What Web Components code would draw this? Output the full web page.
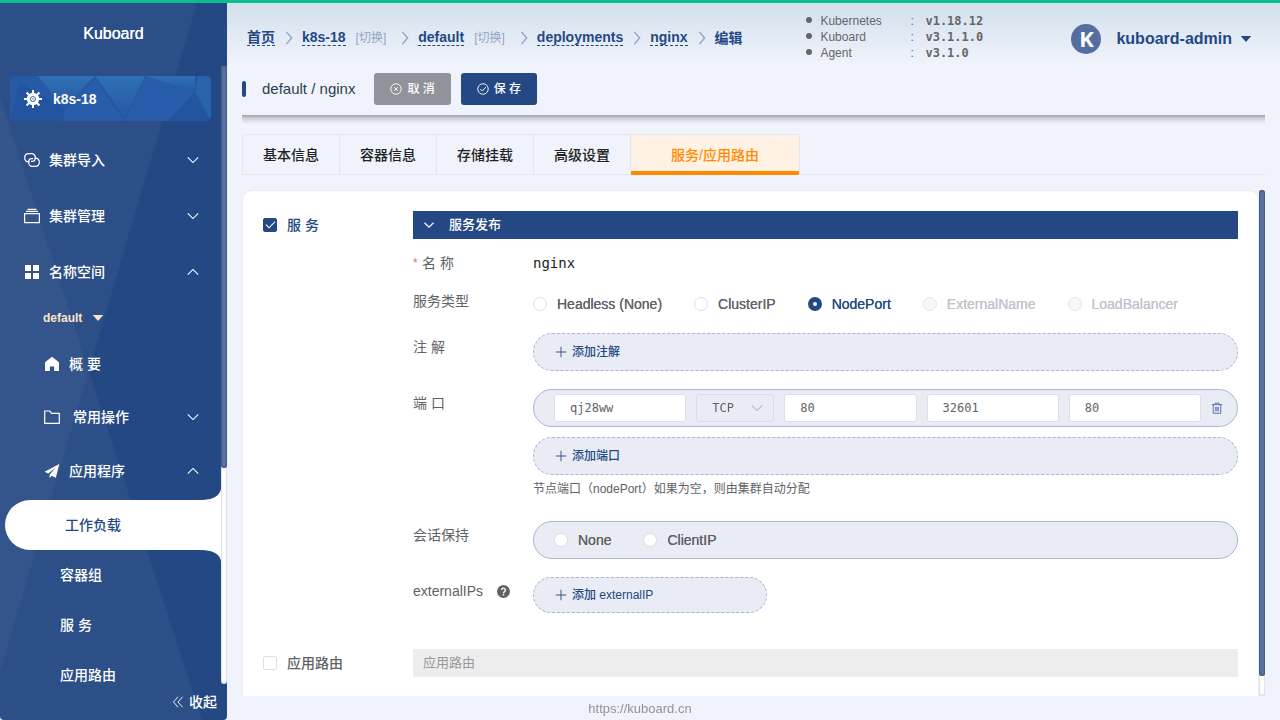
<!DOCTYPE html>
<html lang="zh-CN">
<head>
<meta charset="utf-8">
<meta name="viewport" content="width=device-width, initial-scale=1">
<title>Kuboard</title>
<style>
  :root {
    --brand: #244883;
    --text: #606266;
    --line: #e2e6ef;
    --page: #f0f3fc;
    --mono: "DejaVu Sans Mono", "Noto Sans CJK SC", monospace;
  }
  html, body { height: 100%; margin: 0; }
  body {
    font: 14px/20px "Liberation Sans", "Noto Sans CJK SC", sans-serif;
    color: var(--text);
    background: var(--page);
  }
</style>
</head>
<body>
<kb-app></kb-app>

<script>
const ICONS = {
  down: '<path d="M2 5l6 6 6-6"/>',
  up: '<path d="M2 11l6-6 6 6"/>',
  right: '<path d="M5 1l6 7-6 7"/>',
  caret: '<path d="M1 4h14l-7 8z" fill="currentColor" stroke="none"/>',
  helm: '<g fill="none"><circle cx="8" cy="8" r="4" stroke-width="3"/><circle cx="8" cy="8" r="1.2" stroke-width="1.2"/><path stroke-width="1.8" d="M8 0v3M8 13v3M0 8h3M13 8h3M2.300 2.300l2.200 2.200M11.500 11.500l2.200 2.200M2.300 13.700l2.200-2.200M11.500 4.500l2.200-2.200"/></g>',
  link: '<path d="M5.500 9.800H4.200A3.500 3.500 0 0 1 .7 6.300V5.200A3.500 3.500 0 0 1 4.200 1.700h3.600a3.500 3.500 0 0 1 3.500 3.500v1.100a3 3 0 0 1-2.400 3H7"/><path d="M10.500 6.200h1.300a3.500 3.500 0 0 1 3.500 3.500v1.100a3.500 3.500 0 0 1-3.500 3.500H8.200a3.500 3.500 0 0 1-3.500-3.500V9.700a3 3 0 0 1 2.400-3H9"/>',
  box: '<path d="M.6 5.600h14.800v9H.6zM2 3.400h12M3.500 1.300h9"/>',
  grid: '<path fill="currentColor" stroke="none" d="M1 1h6v6H1zM9 1h6v6H9zM1 9h6v6H1zM9 9h6v6H9z"/>',
  home: '<path fill="currentColor" stroke="none" d="M8 .8l7 5.400V15h-4.800v-4.600H5.800V15H1V6.200z"/>',
  folder: '<path d="M.7 14.300V2h5l2 2.300h7.600v10z"/>',
  plane: '<path fill="currentColor" stroke="none" d="M15.300 1L.6 8.800l3.600 1.700L12 4.500 5.700 11.400 5.600 15l2.200-2.200 4 1.900z"/>',
  fold: '<path d="M8 1L2 8l6 7M14 1L8 8l6 7"/>',
  cancel: '<circle cx="8" cy="8" r="7"/><path d="M5.700 5.700l4.600 4.600M10.300 5.700l-4.600 4.600"/>',
  ok: '<circle cx="8" cy="8" r="7"/><path d="M4.500 8l2.600 2.700L11.800 5.500"/>',
  plus: '<path d="M8 1v14M1 8h14"/>',
  trash: '<path d="M1 3.500h14M5.500 3.500v-2h5v2M3 3.500v11.500h10V3.500M6.300 6.500v6M9.700 6.500v6M8 6.500v6"/>',
  help: '<circle cx="8" cy="8" r="8" fill="currentColor" stroke="none"/><path d="M5.700 6.200a2.300 2.300 0 1 1 3.500 1.900Q8 8.800 8 10M8 11.200v1.600" stroke="#fff" stroke-width="1.700"/>'
};

function define(name, render, setup) {
  customElements.define(name, class extends HTMLElement {
    connectedCallback() {
      if (this.shadowRoot) return;
      this.attachShadow({ mode: 'open' }).innerHTML = render(this);
      if (setup) setup(this, this.shadowRoot);
    }
  });
}

define('kb-icon', el => `
  <style>
    :host { display: inline-block; flex: none; width: 16px; height: 16px; }
    svg { display: block; width: 100%; height: 100%; fill: none; stroke: currentColor; }
  </style>
  <svg viewBox="0 0 16 16" stroke-width="${el.getAttribute('stroke') || 1.2}" aria-hidden="true">${ICONS[el.getAttribute('name')]}</svg>`);

define('kb-scrollbar', el => `
  <style>
    :host { display: block; flex: none; width: 6px; border-radius: 3px; background: #fff; box-shadow: inset 0 0 2px #999; }
    div { height: ${el.getAttribute('size')}; border-radius: 3px; background: #5873a2; box-shadow: inset 0 0 2px #223; }
  </style><div></div>`);

define('kb-menu-item', el => `
  <style>
    :host { display: block; }
    a { display: flex; align-items: center; height: 56px; padding: 0 21px 0 24px; color: #fff; text-decoration: none; font-weight: 500; }
    .gap { width: 9px; flex: none; }
    .grow { flex: 1; }
    :host([level="2"]) a { padding-left: 44px; }
    :host([short]) a { height: 50px; }
    :host([tall]) a { height: 58px; }
    :host([level="3"]) a { height: 50px; padding-left: 60px; }
    :host([active]) { position: relative; margin-left: 5px; }
    :host([active]) a { background: #fff; color: var(--brand); border-radius: 25px 0 0 25px; }
    .ear { position: absolute; right: 0; width: 18px; height: 11px; fill: #fff; display: none; }
    :host([active]) .ear { display: block; }
    .top { bottom: 100%; } .bottom { top: 100%; }
    .arrow { width: 14px; height: 14px; }
  </style>
  <svg class="ear top" viewBox="0 0 18 11"><path d="M0 11Q16 10 18 0V11z"/></svg>
  <a href="#">${el.getAttribute('icon') ? `<kb-icon name="${el.getAttribute('icon')}"></kb-icon><span class="gap"></span>` : ''}
    <span class="grow"><slot></slot></span>
    ${el.getAttribute('arrow') ? `<kb-icon class="arrow" name="${el.getAttribute('arrow')}"></kb-icon>` : ''}</a>
  <svg class="ear bottom" viewBox="0 0 18 11"><path d="M0 0Q16 1 18 11V0z"/></svg>`);

define('kb-sidebar', () => `
  <style>
    :host { position: relative; display: flex; flex-direction: column; flex: none; width: 227px; overflow: hidden; background: var(--brand); border-radius: 0 0 4px 4px; color: #fff; }
    .facets { position: absolute; inset: 0; width: 100%; height: 100%; fill: #fff; fill-opacity: .04; }
    .logo { position: relative; height: 63px; line-height: 61px; text-align: center; font-size: 16px; text-shadow: 0 0 0 currentColor; }
    .body { position: relative; display: flex; flex: 1; min-height: 0; }
    nav { flex: 1; min-width: 0; overflow-y: auto; scrollbar-width: none; }
    .cluster { position: relative; display: flex; align-items: center; gap: 11px; height: 45px; margin: 10px 10px 11px; padding-left: 14px; overflow: hidden; border-radius: 5px; color: #fff; font-weight: bold; text-decoration: none; background: #2457a3; }
    .cluster svg { position: absolute; inset: 0; width: 100%; height: 100%; }
    .cluster kb-icon { position: relative; width: 18px; height: 18px; }
    .cluster span { position: relative; }
    .ns { display: flex; align-items: center; gap: 10px; height: 36px; padding: 0 0 0 43px; border: 0; background: none; color: #fde2c8; font: bold 12px/20px "Liberation Sans", sans-serif; }
    .ns kb-icon { width: 12px; height: 12px; }
    .fold { position: relative; display: flex; align-items: center; justify-content: flex-end; gap: 5px; height: 36px; padding: 0 10px 0 0; border: 0; background: none; color: #fff; font: inherit; font-weight: 500; }
    .fold kb-icon { width: 12px; height: 12px; }
  </style>
  <svg class="facets" viewBox="0 0 227 717" preserveAspectRatio="none"><path d="M0 0H197L0 669z"/><path d="M0 94L202 717H0z"/></svg>
  <div class="logo">Kuboard</div>
  <div class="body">
    <nav>
      <a class="cluster" href="#">
        <svg viewBox="0 0 201 45" preserveAspectRatio="none" aria-hidden="true">
          <defs><linearGradient id="g" x2="0" y2="1"><stop stop-color="#2f70b4"/><stop offset="1" stop-color="#2758a6"/></linearGradient></defs>
          <path fill="#2659a6" d="M0 0h30l24 32-9 13H0z"/><path fill="url(#g)" d="M28 0h57L54 32z"/><path fill="#285dab" d="M85 2l29 43H45z"/>
          <path fill="url(#g)" d="M85 0h50l-20 42z"/><path fill="#265caa" d="M135 0l50 16-27 29h-43z"/><path fill="url(#g)" d="M135 0h50v16z"/>
          <path fill="#2863ac" d="M188 0h13v45h-8l-8-27z"/><path fill="#22549f" d="M0 45l10-38 45 25-2 13zM158 45l27-29 16 29z"/>
        </svg>
        <kb-icon name="helm"></kb-icon><span>k8s-18</span></a>
      <kb-menu-item icon="link" arrow="down">集群导入</kb-menu-item>
      <kb-menu-item icon="box" arrow="down">集群管理</kb-menu-item>
      <kb-menu-item icon="grid" arrow="up">名称空间</kb-menu-item>
      <button class="ns" type="button">default <kb-icon name="caret"></kb-icon></button>
      <kb-menu-item level="2" icon="home">概 要</kb-menu-item>
      <kb-menu-item level="2" icon="folder" arrow="down" short>&nbsp;常用操作</kb-menu-item>
      <kb-menu-item level="2" icon="plane" arrow="up" tall>应用程序</kb-menu-item>
      <kb-menu-item level="3" active>工作负载</kb-menu-item>
      <kb-menu-item level="3">容器组</kb-menu-item>
      <kb-menu-item level="3">服 务</kb-menu-item>
      <kb-menu-item level="3">应用路由</kb-menu-item>
    </nav>
    <kb-scrollbar size="65%"></kb-scrollbar>
  </div>
  <button class="fold" type="button"><kb-icon name="fold"></kb-icon>收起</button>`);

define('kb-crumb', el => `
  <style>
    :host { display: flex; align-items: center; white-space: nowrap; }
    a { color: var(--brand); font-weight: bold; text-decoration: none; border-bottom: 1px dashed var(--brand); line-height: 16px; }
    b { color: var(--brand); line-height: 16px; }
    .switch { margin: 0 5px 0 10px; color: #93a4c4; font-size: 12px; font-weight: normal; border: 0; }
    kb-icon { width: 14px; height: 14px; margin: 0 6px 0 7px; color: #93a4c4; }
  </style>
  ${el.hasAttribute('current') ? '<b><slot></slot></b>' : `<a href="#"><slot></slot></a>
  ${el.hasAttribute('switchable') ? '<a class="switch" href="#">[切换]</a>' : ''}
  <kb-icon name="right" stroke="1.6"></kb-icon>`}`);

define('kb-header', () => `
  <style>
    :host { display: flex; align-items: flex-start; height: 62px; padding: 0 28px 0 20px; background: linear-gradient(#d2e0ec, #f0f3fc); }
    nav { display: flex; flex: 1; padding-top: 26px; min-width: 0; }
    ul { width: 164px; margin: 10px 0 0; padding-left: 14px; font-size: 12px; line-height: 16px; color: #666; list-style: none; }
    li { position: relative; display: grid; grid-template-columns: 90px 15px 1fr; }
    li::before { content: ""; position: absolute; left: -14px; top: 4px; width: 6px; height: 6px; border-radius: 50%; background: #666; }
    b { font-family: var(--mono); }
    .user { display: flex; align-items: center; margin: 21px 0 0 87px; padding: 0; border: 0; background: none; color: var(--brand); font: bold 16px/30px "Liberation Sans", sans-serif; }
    .avatar { width: 30px; height: 30px; margin-right: 15px; border-radius: 50%; background: #536e9f; color: #fff; font-family: "Noto Sans", sans-serif; font-size: 22px; line-height: 29px; text-align: center; }
    .user kb-icon { width: 12px; height: 12px; margin-left: 8px; }
  </style>
  <nav aria-label="breadcrumb">
    <kb-crumb>首页</kb-crumb>
    <kb-crumb switchable>k8s-18</kb-crumb>
    <kb-crumb switchable>default</kb-crumb>
    <kb-crumb>deployments</kb-crumb>
    <kb-crumb>nginx</kb-crumb>
    <kb-crumb current>编辑</kb-crumb>
  </nav>
  <ul>
    <li><span>Kubernetes</span><span>:</span><b>v1.18.12</b></li>
    <li><span>Kuboard</span><span>:</span><b>v3.1.1.0</b></li>
    <li><span>Agent</span><span>:</span><b>v3.1.0</b></li>
  </ul>
  <button class="user" type="button"><span class="avatar">K</span>kuboard-admin<kb-icon name="caret"></kb-icon></button>`);

define('kb-button', el => `
  <style>
    :host { display: block; }
    button { display: flex; align-items: center; gap: 5px; height: 32px; padding: 0 16px; border: 0; border-radius: 3px; color: #fff; background: var(--brand); font: inherit; font-size: 12px; font-weight: 500; }
    :host([kind="info"]) button { background: #909399; }
    kb-icon { width: 12px; height: 12px; }
  </style>
  <button type="button"><kb-icon name="${el.getAttribute('icon')}"></kb-icon><span><slot></slot></span></button>`);

define('kb-title-bar', () => `
  <style>
    :host { display: block; padding-top: 8px; }
    .row { display: flex; align-items: center; gap: 10px; height: 32px; padding-bottom: 10px; }
    h1 { display: flex; align-items: center; gap: 16px; margin: 0 9px 0 0; font-size: 15px; font-weight: normal; color: #2c3e50; }
    h1::before { content: ""; width: 4px; height: 16px; border-radius: 2px; background: var(--brand); }
    .shade { height: 9px; background: linear-gradient(#0005, #0002 40%, #0000); }
  </style>
  <div class="row"><h1>default / nginx</h1>
    <kb-button kind="info" icon="cancel">取 消</kb-button>
    <kb-button icon="ok">保 存</kb-button></div>
  <div class="shade"></div>`);

define('kb-tab', el => `
  <style>
    :host { display: block; border-left: 1px solid var(--line); }
    button { display: block; height: 40px; padding: 0 20px; border: 0; background: none; color: #222; font: inherit; font-weight: 500; }
    :host([active]) { border-right: 1px solid var(--line); }
    :host([active]) button { padding: 0 40px; color: #ff8a00; background: #fff2e4; box-shadow: inset 0 -4px #ff8a00; }
  </style>
  <button type="button" role="tab" aria-selected="${el.hasAttribute('active')}"><slot></slot></button>`);

define('kb-tabs', () => `
  <style>
    :host { display: flex; border-bottom: 1px solid var(--line); }
    div { display: flex; border-top: 1px solid var(--line); border-radius: 4px 4px 0 0; margin-bottom: -1px; }
  </style>
  <div role="tablist"><slot></slot></div>`);

define('kb-check', el => `
  <style>
    :host { display: block; }
    label { display: flex; align-items: center; gap: 10px; height: 28px; font-weight: 500; }
    :host([checked]) label { color: var(--brand); }
    input { appearance: none; display: grid; place-items: center; box-sizing: border-box; width: 14px; height: 14px; margin: 0; border: 1px solid #dcdfe6; border-radius: 2px; background: #fff; }
    input:checked { border-color: var(--brand); background: var(--brand); }
    input:checked::after { content: ""; box-sizing: border-box; width: 5px; height: 9px; margin-top: -3px; border: solid #fff; border-width: 0 1px 1px 0; transform: rotate(45deg); }
  </style>
  <label><input type="checkbox" ${el.hasAttribute('checked') ? 'checked' : ''}><slot></slot></label>`);

define('kb-radio-group', el => `
  <style>
    :host { display: flex; align-items: center; gap: 32px; height: 34px; }
    label { display: flex; align-items: center; gap: 10px; white-space: nowrap; text-shadow: 0 0 0 currentColor; }
    label.on { color: var(--brand); }
    label.off { color: #c0c4cc; }
    input { appearance: none; box-sizing: border-box; width: 14px; height: 14px; margin: 0; border: 1px solid #dcdfe6; border-radius: 50%; background: #fff; }
    input:checked { border: 5px solid var(--brand); }
    input:disabled { background: #f5f7fa; border-color: #e4e7ed; }
  </style>
  ${el.getAttribute('options').split(',').map(o => {
    const off = (el.getAttribute('disabled') || '').split(',').includes(o), on = el.getAttribute('value') === o;
    return `<label class="${off ? 'off' : on ? 'on' : ''}"><input type="radio" name="g" ${on ? 'checked' : ''} ${off ? 'disabled' : ''}>${o}</label>`;
  }).join('')}`);

define('kb-add', () => `
  <style>
    :host { display: block; }
    button { display: flex; align-items: center; gap: 5px; box-sizing: border-box; width: 100%; height: 38px; padding: 0 21px; border: 1px dashed #a7b6d2; border-radius: 19px; background: #e9ecf4; color: var(--brand); font: inherit; font-size: 12px; font-weight: 500; }
    :host([narrow]) { width: 234px; }
    :host([narrow]) button { height: 36px; }
    kb-icon { width: 12px; height: 12px; }
  </style>
  <button type="button"><kb-icon name="plus"></kb-icon><span><slot></slot></span></button>`);

define('kb-pill', () => `
  <style>
    :host { display: flex; align-items: center; gap: 10px; box-sizing: border-box; height: 38px; padding: 0 14px 0 20px; border: 1px solid #a7b6d2; border-radius: 19px; background: #e9ecf4; }
  </style><slot></slot>`);

define('kb-input', el => `
  <style>
    :host { display: block; flex: 1; min-width: 0; }
    input { display: block; box-sizing: border-box; width: 100%; height: 28px; padding: 0 15px; border: 1px solid #dcdfe6; border-radius: 3px; background: #fff; color: var(--text); font: 12px/26px var(--mono); }
  </style>
  <input type="text" aria-label="${el.getAttribute('label')}" value="${el.getAttribute('value')}">`);

define('kb-select', el => `
  <style>
    :host { position: relative; display: block; flex: none; width: 78px; }
    select { appearance: none; display: block; box-sizing: border-box; width: 100%; height: 28px; padding: 0 15px; border: 1px solid #d8dce6; border-radius: 3px; background: transparent; color: var(--text); opacity: 1; font: 12px/26px var(--mono); }
    kb-icon { position: absolute; right: 10px; top: 7px; width: 14px; height: 14px; color: #b4b8c0; pointer-events: none; }
  </style>
  <select aria-label="${el.getAttribute('label')}" disabled><option>${el.getAttribute('value')}</option></select>
  <kb-icon name="down"></kb-icon>`);

define('kb-row', el => `
  <style>
    :host { display: grid; grid-template-columns: 120px minmax(0, 1fr); min-height: 28px; margin-bottom: 18px; }
    :host([tight]) { margin-bottom: 10px; }
    :host([tall]) { min-height: 36px; }
    .label { display: flex; align-items: center; height: 28px; }
    i { width: 9px; font-style: normal; font-size: 12px; line-height: 20px; color: #f56c6c; }
    kb-icon { width: 13px; height: 13px; margin-left: 14px; }
    .content { display: flex; flex-direction: column; gap: 10px; line-height: 28px; }
  </style>
  <div class="label">${el.hasAttribute('required') ? '<i>*</i>' : ''}${el.getAttribute('label')}${el.hasAttribute('help') ? '<kb-icon name="help"></kb-icon>' : ''}</div>
  <div class="content"><slot></slot></div>`);

define('kb-service-form', () => `
  <style>
    :host { display: block; }
    .section { display: grid; grid-template-columns: 150px minmax(0, 1fr); }
    .head { display: flex; align-items: center; gap: 14px; width: 100%; height: 28px; margin: 0 0 10px; padding: 0 10px; border: 0; background: var(--brand); color: #fff; font: inherit; font-size: 13px; font-weight: 500; text-align: left; }
    .head kb-icon { width: 12px; height: 12px; }
    .closed { height: 28px; padding: 0 10px; background: #ededed; color: #999; font-size: 13px; line-height: 28px; }
    .name { font-family: var(--mono); color: #222; }
    .hint { height: 28px; margin-top: -10px; font-size: 12px; }
    .delete { display: block; padding: 0; border: 0; background: none; color: #4a69a5; }
    .delete kb-icon { display: block; width: 12px; height: 12px; }
    .last { margin-bottom: 36px; }
  </style>
  <div class="section">
    <kb-check checked>服 务</kb-check>
    <div>
      <button class="head" type="button"><kb-icon name="down" stroke="1.6"></kb-icon>服务发布</button>
      <kb-row label="名 称" required tight><span class="name">nginx</span></kb-row>
      <kb-row label="服务类型" tight tall><kb-radio-group options="Headless (None),ClusterIP,NodePort,ExternalName,LoadBalancer" value="NodePort" disabled="ExternalName,LoadBalancer"></kb-radio-group></kb-row>
      <kb-row label="注 解"><kb-add>添加注解</kb-add></kb-row>
      <kb-row label="端 口">
        <kb-pill>
          <kb-input label="名称" value="qj28ww"></kb-input>
          <kb-select label="协议" value="TCP"></kb-select>
          <kb-input label="服务端口" value="80"></kb-input>
          <kb-input label="节点端口" value="32601"></kb-input>
          <kb-input label="容器端口" value="80"></kb-input>
          <button class="delete" type="button" aria-label="删除"><kb-icon name="trash"></kb-icon></button>
        </kb-pill>
        <kb-add>添加端口</kb-add>
        <div class="hint">节点端口（nodePort）如果为空，则由集群自动分配</div>
      </kb-row>
      <kb-row label="会话保持"><kb-pill><kb-radio-group options="None,ClientIP"></kb-radio-group></kb-pill></kb-row>
      <kb-row class="last" label="externalIPs" help><kb-add narrow>添加 externalIP</kb-add></kb-row>
    </div>
  </div>
  <div class="section"><kb-check>应用路由</kb-check><div class="closed">应用路由</div></div>`);

define('kb-app', () => `
  <style>
    :host { display: flex; box-sizing: border-box; height: 100vh; border-top: 3px solid #0bbf8c; }
    main { display: flex; flex-direction: column; flex: 1; min-width: 0; }
    .page { display: flex; flex-direction: column; flex: 1; min-height: 0; padding: 0 15px; }
    kb-tabs { margin: 10px 0 15px; }
    .panel { display: flex; flex: 1; min-height: 0; }
    .card { flex: 1; min-width: 0; box-sizing: border-box; padding: 20px; overflow-y: auto; scrollbar-width: none; background: #fff; border: 1px solid #e8ecf5; border-bottom: 0; border-radius: 10px 10px 0 0; }
    footer { height: 24px; padding-right: 227px; text-align: center; line-height: 24px; }
    footer a { color: #909399; font-size: 13px; text-decoration: none; }
  </style>
  <kb-sidebar></kb-sidebar>
  <main>
    <kb-header></kb-header>
    <div class="page">
      <kb-title-bar></kb-title-bar>
      <kb-tabs>
        <kb-tab>基本信息</kb-tab><kb-tab>容器信息</kb-tab><kb-tab>存储挂载</kb-tab><kb-tab>高级设置</kb-tab><kb-tab active>服务/应用路由</kb-tab>
      </kb-tabs>
      <div class="panel">
        <div class="card"><kb-service-form></kb-service-form></div>
        <kb-scrollbar size="96%"></kb-scrollbar>
      </div>
    </div>
    <footer><a href="https://kuboard.cn">https://kuboard.cn</a></footer>
  </main>`);
</script>
</body>
</html>
